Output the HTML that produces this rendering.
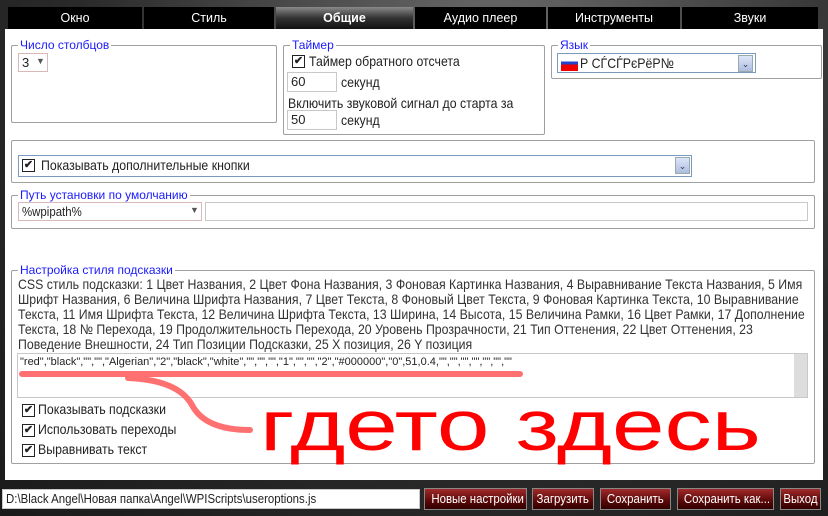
<!DOCTYPE html>
<html><head><meta charset="utf-8"><style>
*{box-sizing:border-box;margin:0;padding:0}
body{width:828px;height:516px;overflow:hidden;position:relative;background:radial-gradient(ellipse at 60% 10%,#6a6a6a,#2a2a2a 60%,#1a1a1a);font-family:"Liberation Sans",sans-serif;font-size:14px;color:#222}
.a{position:absolute;white-space:nowrap}
.n{transform:scaleX(.88);transform-origin:0 0}
.tab{position:absolute;top:7px;height:22px;background:#000;color:#fff;text-align:center;line-height:22px;font-size:12.5px}
.panel{position:absolute;left:5px;top:29px;width:818px;height:451px;background:#fff}
fieldset{position:absolute;border:1px solid #a0a0a0;border-radius:2px}
legend{color:#1a1aff;font-size:12px;padding:0 2px;margin-left:6px;line-height:12px}
.cb{position:absolute;width:13px;height:13px;border:1px solid #222;background:#fff;font-size:11px;line-height:11px;text-align:center;font-weight:bold}
.inp{position:absolute;border:1px solid #c8c8c8;background:#fff;padding-left:3px;line-height:18px;font-size:13px;white-space:nowrap;overflow:hidden}
.btn{position:absolute;top:488px;height:22px;background:linear-gradient(#a02a2a,#5a0808 60%,#300);border:1px solid #888;color:#fff;font-size:13px;text-align:center;line-height:20px;white-space:nowrap;overflow:hidden}
.btn span{display:inline-block;transform:scaleX(.88)}
.dd{position:absolute;width:15px;height:17px;background:linear-gradient(#dde6f8,#aebde0);border:1px solid #9aa;color:#335;font-size:9px;text-align:center;line-height:16px}
</style></head><body>
<div class="tab" style="left:8px;width:134px">Окно</div>
<div class="tab" style="left:144px;width:130px">Стиль</div>
<div class="tab" style="left:276px;width:137px;background:linear-gradient(#8a8a8a,#333 50%,#111);font-weight:bold">Общие</div>
<div class="tab" style="left:415px;width:131px">Аудио плеер</div>
<div class="tab" style="left:548px;width:132px">Инструменты</div>
<div class="tab" style="left:682px;width:136px">Звуки</div>
<div class="panel"></div>

<fieldset style="left:11px;top:39px;width:266px;height:84px"><legend>Число столбцов</legend></fieldset>
<div class="inp" style="left:18px;top:53px;width:30px;height:19px;border-color:#d8b8b8">3</div>
<div class="a" style="left:36px;top:56px;font-size:9px;color:#555">▼</div>

<fieldset style="left:283px;top:39px;width:262px;height:96px"><legend>Таймер</legend></fieldset>
<div class="cb" style="left:292px;top:55px">✔</div>
<div class="a n" style="left:309px;top:53px">Таймер обратного отсчета</div>
<div class="inp" style="left:287px;top:72px;width:50px;height:20px">60</div>
<div class="a n" style="left:341px;top:74px">секунд</div>
<div class="a n" style="left:288px;top:95px">Включить звуковой сигнал до старта за</div>
<div class="inp" style="left:287px;top:110px;width:50px;height:20px">50</div>
<div class="a n" style="left:341px;top:112px">секунд</div>

<fieldset style="left:551px;top:39px;width:271px;height:40px"><legend>Язык</legend></fieldset>
<div class="inp" style="left:557px;top:53px;width:199px;height:20px;border-color:#7a9ac0"></div>
<div class="a" style="left:561px;top:57px;width:17px;height:14px;background:linear-gradient(#fff 33%,#2244cc 33%,#2244cc 55%,#e00 55%)"></div>
<div class="a n" style="left:580px;top:55px">Р СЃСЃРєРёР№</div>
<div class="dd" style="left:738px;top:55px">⌄</div>

<fieldset style="left:11px;top:140px;width:804px;height:43px"></fieldset>
<div class="inp" style="left:18px;top:155px;width:674px;height:22px;border-color:#7a9ac0"></div>
<div class="cb" style="left:22px;top:159px">✔</div>
<div class="a n" style="left:41px;top:157px">Показывать дополнительные кнопки</div>
<div class="dd" style="left:675px;top:157px">⌄</div>

<fieldset style="left:11px;top:189px;width:804px;height:40px"><legend>Путь установки по умолчанию</legend></fieldset>
<div class="inp" style="left:18px;top:202px;width:184px;height:19px;border-color:#d8b8b8"><span style="display:inline-block;transform:scaleX(.88);transform-origin:0 0">%wpipath%</span></div>
<div class="a" style="left:190px;top:205px;font-size:9px;color:#555">▼</div>
<div class="inp" style="left:205px;top:202px;width:603px;height:19px"></div>

<fieldset style="left:11px;top:264px;width:804px;height:200px"><legend>Настройка стиля подсказки</legend></fieldset>
<div class="a" style="left:18px;top:277px;line-height:15px;font-size:14px;color:#333;transform:scaleX(.88);transform-origin:0 0">CSS стиль подсказки: 1 Цвет Названия, 2 Цвет Фона Названия, 3 Фоновая Картинка Названия, 4 Выравнивание Текста Названия, 5 Имя<br>Шрифт Названия, 6 Величина Шрифта Названия, 7 Цвет Текста, 8 Фоновый Цвет Текста, 9 Фоновая Картинка Текста, 10 Выравнивание<br>Текста, 11 Имя Шрифта Текста, 12 Величина Шрифта Текста, 13 Ширина, 14 Высота, 15 Величина Рамки, 16 Цвет Рамки, 17 Дополнение<br>Текста, 18 № Перехода, 19 Продолжительность Перехода, 20 Уровень Прозрачности, 21 Тип Оттенения, 22 Цвет Оттенения, 23<br>Поведение Внешности, 24 Тип Позиции Подсказки, 25 X позиция, 26 Y позиция</div>
<div class="inp" style="left:17px;top:353px;width:791px;height:45px"></div>
<div class="a" style="left:794px;top:354px;width:13px;height:43px;background:#ddd"></div>
<div class="a" style="left:20px;top:356px;font-size:11px">"red","black","","","Algerian","2","black","white","","","","1","","","2","#000000","0",51,0.4,"","","","","","",""</div>
<svg class="a" style="left:0;top:0" width="828" height="516"><path d="M22 374 L520 374 M128 378 Q178 380 192 405 Q205 430 250 430" stroke="#ff7070" stroke-width="6" fill="none" stroke-linecap="round"/></svg>
<div class="cb" style="left:22px;top:404px">✔</div><div class="a n" style="left:38px;top:401px">Показывать подсказки</div>
<div class="cb" style="left:22px;top:424px">✔</div><div class="a n" style="left:38px;top:421px">Использовать переходы</div>
<div class="cb" style="left:22px;top:444px">✔</div><div class="a n" style="left:38px;top:441px">Выравнивать текст</div>
<div class="a" style="left:260px;top:391px;font-size:71px;color:#ff0000;line-height:71px;transform:scaleX(1.33);transform-origin:0 0">гдето здесь</div>

<div class="inp" style="left:2px;top:489px;width:418px;height:20px;font-size:13px"><span style="display:inline-block;transform:scaleX(.88);transform-origin:0 0">D:\Black Angel\Новая папка\Angel\WPIScripts\useroptions.js</span></div>
<div class="btn" style="left:424px;width:103px"><span>Новые настройки</span></div>
<div class="btn" style="left:532px;width:62px"><span>Загрузить</span></div>
<div class="btn" style="left:600px;width:71px"><span>Сохранить</span></div>
<div class="btn" style="left:677px;width:97px"><span>Сохранить как...</span></div>
<div class="btn" style="left:780px;width:41px"><span>Выход</span></div>
</body></html>
